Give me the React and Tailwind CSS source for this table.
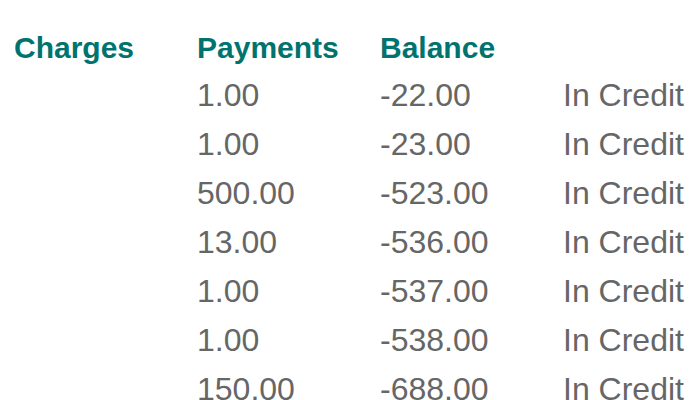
const ROWS = [
  { payment: '1.00', balance: '-22.00', status: 'In Credit' },
  { payment: '1.00', balance: '-23.00', status: 'In Credit' },
  { payment: '500.00', balance: '-523.00', status: 'In Credit' },
  { payment: '13.00', balance: '-536.00', status: 'In Credit' },
  { payment: '1.00', balance: '-537.00', status: 'In Credit' },
  { payment: '1.00', balance: '-538.00', status: 'In Credit' },
  { payment: '150.00', balance: '-688.00', status: 'In Credit' },
]

export default function App() {
  return (
    <div className="w-[700px] h-[400px] overflow-hidden bg-white pl-[14px] pt-[24px]">
      <div className="grid grid-cols-[183px_183px_183px_1fr] font-['Liberation_Sans',Arial,sans-serif] font-bold text-[30px] leading-[47px] text-[#00736f]">
        <div>Charges</div>
        <div>Payments</div>
        <div>Balance</div>
        <div></div>
      </div>
      {ROWS.map((r, i) => (
        <div
          key={i}
          className="grid grid-cols-[183px_183px_183px_1fr] font-['Liberation_Sans',Arial,sans-serif] text-[32px] leading-[49px] text-[#666666]"
        >
          <div></div>
          <div>{r.payment}</div>
          <div>{r.balance}</div>
          <div>{r.status}</div>
        </div>
      ))}
    </div>
  )
}
